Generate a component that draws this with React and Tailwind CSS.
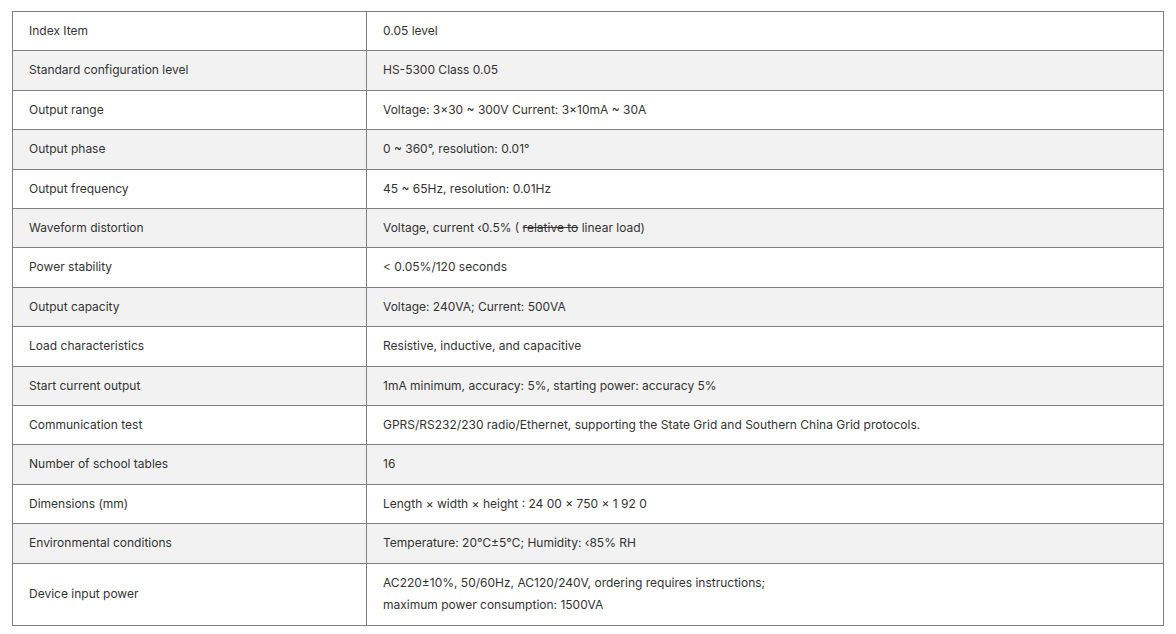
import React from "react";

const rows = [
  ["Index Item", "0.05 level"],
  ["Standard configuration level", "HS-5300 Class 0.05"],
  ["Output range", "Voltage: 3×30 ~ 300V Current: 3×10mA ~ 30A"],
  ["Output phase", "0 ~ 360°, resolution: 0.01°"],
  ["Output frequency", "45 ~ 65Hz, resolution: 0.01Hz"],
  [
    "Waveform distortion",
    <>
      Voltage, current ‹0.5% ( <s>relative to</s> linear load)
    </>,
  ],
  ["Power stability", " < 0.05%/120 seconds"],
  ["Output capacity", "Voltage: 240VA; Current: 500VA"],
  ["Load characteristics", "Resistive, inductive, and capacitive"],
  ["Start current output", "1mA minimum, accuracy: 5%, starting power: accuracy 5%"],
  [
    "Communication test",
    "GPRS/RS232/230 radio/Ethernet, supporting the State Grid and Southern China Grid protocols.",
  ],
  ["Number of school tables", "16"],
  ["Dimensions (mm)", "Length × width × height : 24 00 × 750 × 1 92 0"],
  ["Environmental conditions", "Temperature: 20℃±5℃; Humidity: ‹85% RH"],
  [
    "Device input power",
    <>
      AC220±10%, 50/60Hz, AC120/240V, ordering requires instructions;
      <br />
      maximum power consumption: 1500VA
    </>,
  ],
];

export default function App() {
  return (
    <div className="bg-white w-[1176px] h-[634px] pt-[11px] pl-[12px]" style={{ fontFamily: "Inter, 'Noto Sans', sans-serif" }}>
      <table className="w-[1152px] border-collapse text-[12px] text-[#333333]">
        <tbody>
          {rows.map((r, i) => (
            <tr key={i} className={i % 2 === 1 ? "bg-[#f2f2f2]" : "bg-white"}>
              <td className="w-[354px] border border-[#808080] px-4 py-2 leading-[22.4px] align-middle">{r[0]}</td>
              <td className="border border-[#808080] px-4 py-2 leading-[22.4px] align-middle">{r[1]}</td>
            </tr>
          ))}
        </tbody>
      </table>
    </div>
  );
}
